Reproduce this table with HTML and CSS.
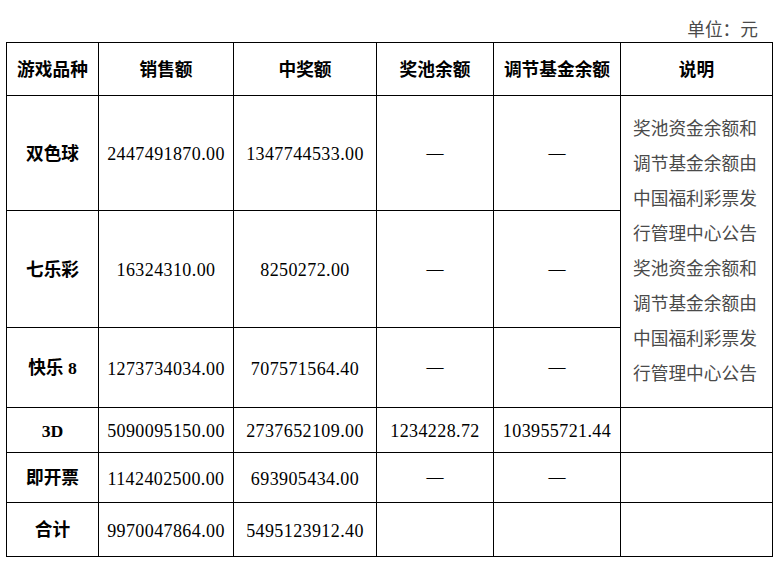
FILE: index.html
```html
<!DOCTYPE html>
<html lang="zh-CN">
<head>
<meta charset="utf-8">
<title>销售情况</title>
<link rel="stylesheet" href="styles.css">
</head>
<body>
<div class="page">
  <div class="unit">单位：元</div>
  <table class="report">
    <colgroup>
      <col class="c1"><col class="c2"><col class="c3"><col class="c4"><col class="c5"><col class="c6">
    </colgroup>
    <thead>
      <tr class="r-head">
        <th>游戏品种</th><th>销售额</th><th>中奖额</th><th>奖池余额</th><th>调节基金余额</th><th>说明</th>
      </tr>
    </thead>
    <tbody>
      <tr class="r1">
        <th>双色球</th><td class="num">2447491870.00</td><td class="num">1347744533.00</td><td class="dash">—</td><td class="dash">—</td>
        <td class="note" rowspan="3">奖池资金余额和调节基金余额由中国福利彩票发行管理中心公告奖池资金余额和调节基金余额由中国福利彩票发行管理中心公告</td>
      </tr>
      <tr class="r2">
        <th>七乐彩</th><td class="num">16324310.00</td><td class="num">8250272.00</td><td class="dash">—</td><td class="dash">—</td>
      </tr>
      <tr class="r3">
        <th>快乐 8</th><td class="num">1273734034.00</td><td class="num">707571564.40</td><td class="dash">—</td><td class="dash">—</td>
      </tr>
      <tr class="r4">
        <th class="latin">3D</th><td class="num">5090095150.00</td><td class="num">2737652109.00</td><td class="num">1234228.72</td><td class="num">103955721.44</td><td></td>
      </tr>
      <tr class="r5">
        <th>即开票</th><td class="num">1142402500.00</td><td class="num">693905434.00</td><td class="dash">—</td><td class="dash">—</td><td></td>
      </tr>
      <tr class="r6">
        <th>合计</th><td class="num">9970047864.00</td><td class="num">5495123912.40</td><td></td><td></td><td></td>
      </tr>
    </tbody>
  </table>
</div>
</body>
</html>
```

FILE: styles.css
```css
html, body {
  margin: 0;
  padding: 0;
  background: #ffffff;
}

.page {
  padding: 0 4px 0 6px;
  font-family: "Liberation Serif", "Noto Sans CJK SC", serif;
  font-size: 17.7px;
  color: #000;
}

.unit {
  height: 42px;
  box-sizing: border-box;
  padding-top: 16px;
  padding-right: 14px;
  line-height: 24px;
  text-align: right;
  color: #4a4a4a;
  font-family: "Noto Sans CJK SC", sans-serif;
}

.report {
  border-collapse: collapse;
  table-layout: fixed;
  width: 766px;
}

.c1 { width: 92px; }
.c2 { width: 135px; }
.c3 { width: 143px; }
.c4 { width: 117px; }
.c5 { width: 127px; }
.c6 { width: 152px; }

.report th,
.report td {
  border: 1px solid #000;
  padding: 0 0 3px 0;
  text-align: center;
  vertical-align: middle;
}

.report th {
  font-family: "Liberation Serif", "Noto Sans CJK SC", serif;
  font-weight: bold;
}

.report .latin {
  padding: 3px 0 0 0;
}

.r-head th {
  font-family: "Noto Sans CJK SC", sans-serif;
}

.report .num {
  letter-spacing: 0.4px;
  font-size: 18px;
  padding: 3px 0 0 0;
}

.report .dash {
  font-family: "Liberation Serif", serif;
  font-size: 17px;
  padding: 1px 0 2px 0;
}

.report .note {
  font-family: "Noto Sans CJK SC", sans-serif;
  color: #4a4a4a;
  line-height: 35px;
  padding: 0 12px 3px 12px;
  text-align: left;
}

.r-head th { height: 49px; }
.r1 th, .r1 td { height: 111px; }
.r2 th, .r2 td { height: 113px; }
.r3 th, .r3 td { height: 76px; }
.r4 th, .r4 td { height: 41px; }
.r5 th, .r5 td { height: 46px; }
.r6 th, .r6 td { height: 50px; }
```
